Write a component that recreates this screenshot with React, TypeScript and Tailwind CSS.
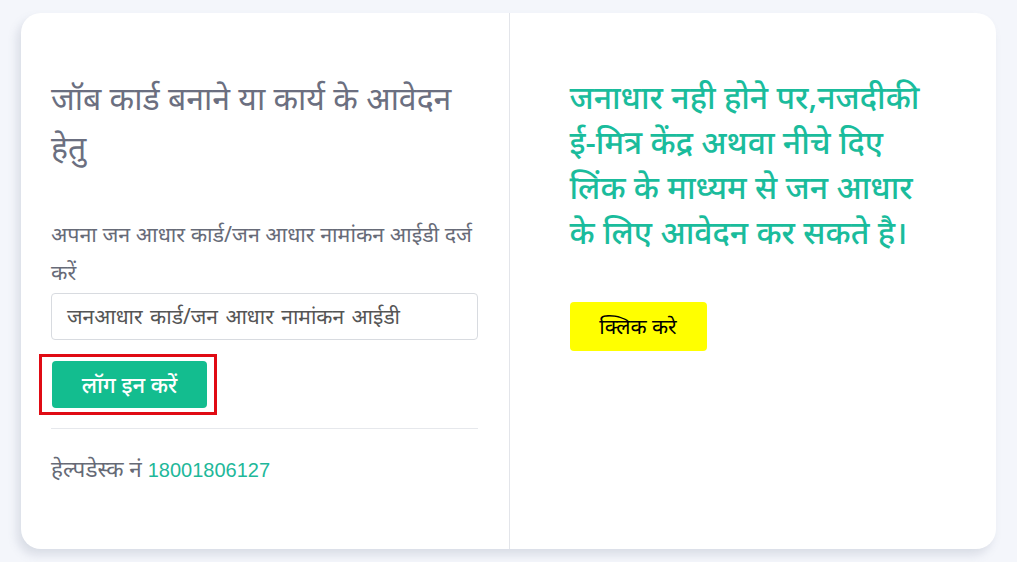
import React from "react";

export default function App() {
  return (
    <div className="min-h-[562px] w-full bg-[#f4f6fb] px-[21px] pt-[13px] pb-[13px] font-['Noto_Sans','Noto_Sans_Devanagari','Liberation_Sans',sans-serif]">
      <div className="grid h-[536px] w-[975px] grid-cols-2 rounded-[20px] bg-white shadow-[-4px_6px_10px_rgba(100,110,140,0.18)]">
        <div className="flex flex-col px-[30px] pt-[60px]">
          <h2 className="whitespace-nowrap text-[32px] leading-[49px] text-[#6b6f80]">
            जॉब कार्ड बनाने या कार्य के आवेदन
            <br />
            हेतु
          </h2>
          <p className="mt-[44px] whitespace-nowrap text-[21.4px] leading-[38px] text-[#676b78]">
            अपना जन आधार कार्ड/जन आधार नामांकन आईडी दर्ज
            <br />
            करें
          </p>
          <div className="mt-[2px] flex h-[47px] w-[427px] items-center whitespace-nowrap rounded-[4px] border border-[#d8dbe0] px-[15px] text-[21px] text-[#555] [word-spacing:2px]">
            जनआधार कार्ड/जन आधार नामांकन आईडी
          </div>
          <div className="mt-[14px] -ml-[12px] w-[178px] border-[3px] border-[#e00b14] pt-[4px] pr-[7px] pb-[4px] pl-[10px]">
            <button className="flex h-[47px] w-[155px] items-center justify-center rounded-[4px] bg-[#13bd8f] text-[22px] font-medium text-white">
              लॉग इन करें
            </button>
          </div>
          <div className="mt-[13px] h-px w-[427px] bg-[#e6e8ec]" />
          <p className="mt-[25px] text-[22.5px] leading-[30px] text-[#666a76]">
            हेल्पडेस्क नं{" "}
            <span className="font-['Liberation_Sans',sans-serif] text-[20px] text-[#1eb89a]">18001806127</span>
          </p>
        </div>
        <div className="border-l border-[#e3e5ea] px-[60px] pt-[61px]">
          <p className="whitespace-nowrap text-[32px] font-medium leading-[45px] text-[#1abc9c]">
            जनाधार नही होने पर,नजदीकी
            <br />
            ई-मित्र केंद्र अथवा नीचे दिए
            <br />
            लिंक के माध्यम से जन आधार
            <br />
            के लिए आवेदन कर सकते है।
          </p>
          <button className="mt-[48px] flex h-[49px] w-[137px] items-center justify-center rounded-[4px] bg-[#ffff00] text-[21px] text-black">
            क्लिक करे
          </button>
        </div>
      </div>
    </div>
  );
}
